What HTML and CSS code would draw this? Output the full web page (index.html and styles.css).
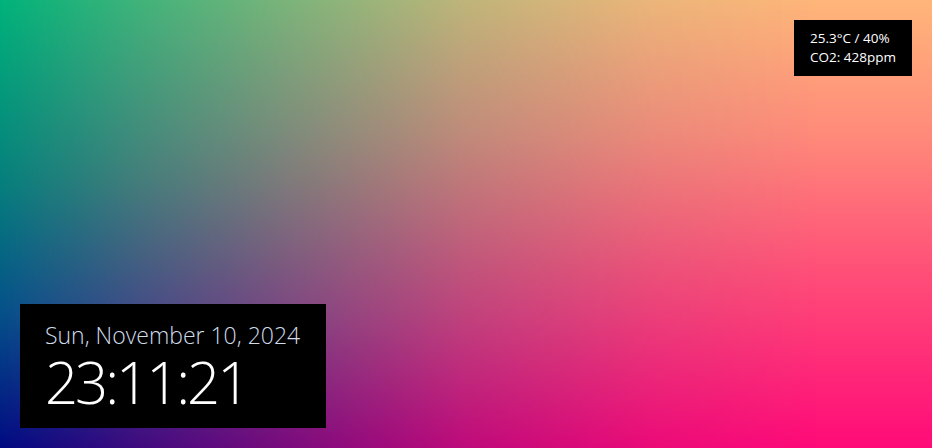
FILE: index.html
```html
<!DOCTYPE html>
<html lang="en">
<head>
<meta charset="utf-8">
<title>Clock</title>
<link rel="stylesheet" href="styles.css">
</head>
<body>
<main class="screen">
  <section class="sensors">
    <div class="sensor-line">25.3°C / 40%</div>
    <div class="sensor-line">CO2: 428ppm</div>
  </section>
  <section class="clock">
    <div class="date">Sun, November 10, 2024</div>
    <div class="time">23:11:21</div>
  </section>
</main>
</body>
</html>
```
FILE: styles.css
```css
html, body {
  margin: 0;
  padding: 0;
  height: 100%;
  overflow: hidden;
}

body {
  background: linear-gradient(to bottom, #ffb67a 0%, #ff8a7a 30%, #ff5078 60%, #ff0a78 100%);
}

.screen {
  position: relative;
  box-sizing: border-box;
  height: 100vh;
  padding: 20px;
  display: flex;
  flex-direction: column;
  justify-content: space-between;
  font-family: "Open Sans", "Liberation Sans", sans-serif;
}

.screen::before {
  content: "";
  position: absolute;
  inset: 0;
  background: linear-gradient(to bottom, #00b27a 0%, #05807c 40%, #04508a 70%, #000a82 100%);
  -webkit-mask-image: linear-gradient(to right, #000 0%, rgba(0,0,0,0.75) 15%, rgba(0,0,0,0.5) 32%, rgba(0,0,0,0.25) 50%, rgba(0,0,0,0.08) 70%, transparent 88%);
  mask-image: linear-gradient(to right, #000 0%, rgba(0,0,0,0.75) 15%, rgba(0,0,0,0.5) 32%, rgba(0,0,0,0.25) 50%, rgba(0,0,0,0.08) 70%, transparent 88%);
  z-index: 0;
}

.sensors {
  position: relative;
  z-index: 1;
  align-self: flex-end;
  background: #000;
  color: #fff;
  padding: 9px 16px;
  font-size: 13.5px;
  line-height: 19px;
}

.clock {
  position: relative;
  z-index: 1;
  align-self: flex-start;
  background: #000;
  padding: 16px 25px 14px 25px;
  width: 256px;
}

.date {
  color: #d0dcea;
  font-size: 23px;
  font-weight: 300;
  line-height: 30px;
}

.time {
  color: #fff;
  font-size: 58px;
  font-weight: 300;
  line-height: 64px;
  letter-spacing: -3px;
}
```
